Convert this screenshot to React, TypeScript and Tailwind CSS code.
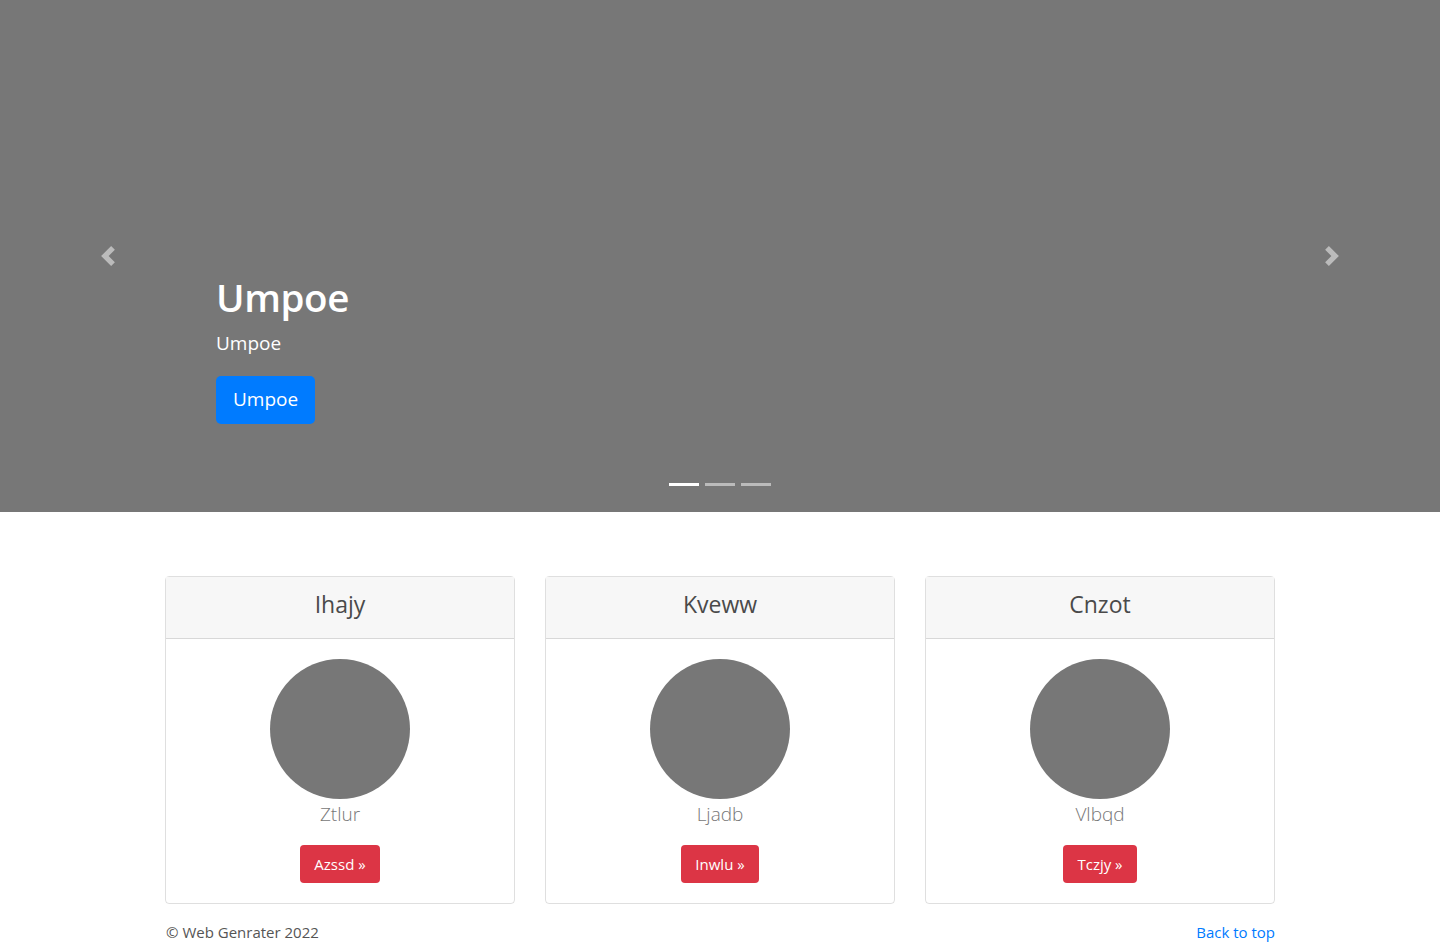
const cards = [
  { title: "Ihajy", name: "Ztlur", btn: "Azssd" },
  { title: "Kveww", name: "Ljadb", btn: "Inwlu" },
  { title: "Cnzot", name: "Vlbqd", btn: "Tczjy" },
];

function Chevron({ dir }: { dir: "left" | "right" }) {
  return (
    <svg width="20" height="20" viewBox="0 0 8 8" fill="#fff">
      {dir === "left" ? (
        <path d="M5.25 0l-4 4 4 4 1.5-1.5L4.25 4l2.5-2.5L5.25 0z" />
      ) : (
        <path d="M2.75 0l-1.5 1.5L3.75 4l-2.5 2.5L2.75 8l4-4-4-4z" />
      )}
    </svg>
  );
}

export default function App() {
  return (
    <div className="min-h-[944px] bg-white font-['Open_Sans',sans-serif] text-[#212529]">
      {/* carousel */}
      <div className="relative h-[512px] bg-[#777777]">
        <button className="absolute left-0 top-0 flex h-full w-[216px] items-center justify-center opacity-50">
          <Chevron dir="left" />
        </button>
        <button className="absolute right-0 top-0 flex h-full w-[216px] items-center justify-center opacity-50">
          <Chevron dir="right" />
        </button>

        <div className="absolute left-[216px] top-[274px] text-white">
          <h1 className="text-[38.5px] font-semibold leading-[1.2] tracking-[-0.4px]">Umpoe</h1>
          <p className="mt-[9px] text-[19px] leading-[1.5]">Umpoe</p>
          <button className="mt-[18px] h-[48px] rounded-[5px] bg-[#007bff] px-[17px] text-[19px] text-white">
            Umpoe
          </button>
        </div>

        <div className="absolute bottom-[26px] left-0 right-0 flex justify-center gap-[6px]">
          <span className="h-[3px] w-[30px] bg-white" />
          <span className="h-[3px] w-[30px] bg-white/50" />
          <span className="h-[3px] w-[30px] bg-white/50" />
        </div>
      </div>

      {/* cards */}
      <div className="mx-auto w-[1110px] pt-[64px]">
        <div className="grid grid-cols-3 gap-[30px]">
          {cards.map((c) => (
            <div
              key={c.title}
              className="flex flex-col rounded-[4px] border border-black/[0.125] text-center"
            >
              <div className="h-[62px] border-b border-black/[0.125] bg-[#f7f7f7] pt-[14px]">
                <h4 className="text-[23px] font-medium leading-[1.2] text-[#4a4a4a]">{c.title}</h4>
              </div>
              <div className="flex flex-col items-center px-[20px] py-[20px]">
                <div className="h-[140px] w-[140px] rounded-full bg-[#777777]" />
                <p className="mt-[4px] text-[19px] font-light leading-[1.2] text-[#777777]">
                  {c.name}
                </p>
                <button className="mt-[19px] h-[38px] rounded-[4px] bg-[#dc3545] px-[14px] text-[15px] text-white">
                  {c.btn} »
                </button>
              </div>
            </div>
          ))}
        </div>

        <footer className="mt-[16px] flex justify-between text-[15px] leading-[24px]">
          <p className="pl-[1px] text-[#555555]">© Web Genrater 2022</p>
          <a href="#" className="text-[#007bff]">
            Back to top
          </a>
        </footer>
      </div>
    </div>
  );
}
